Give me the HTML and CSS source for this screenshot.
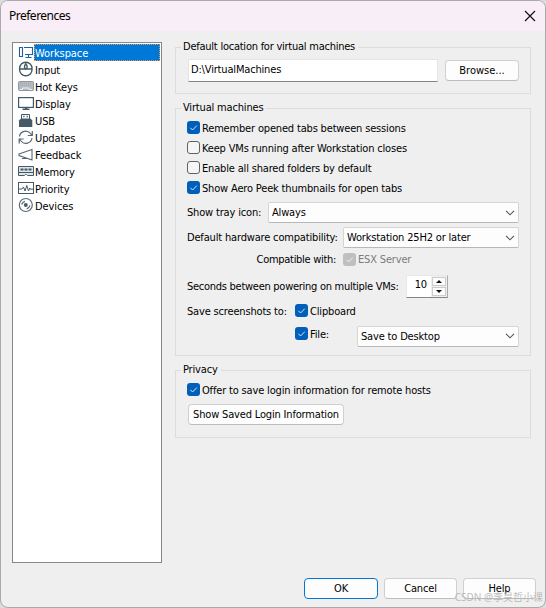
FILE: index.html
```html
<!DOCTYPE html>
<html lang="en">
<head>
<meta charset="utf-8">
<title>Preferences</title>
<link rel="stylesheet" href="styles.css">
</head>
<body>
<svg width="0" height="0" class="defs">
  <symbol id="tick" viewBox="0 0 13 13"><path d="M3.4 6.8l2.2 2.2 4.2-4.4" fill="none" stroke="currentColor"/></symbol>
  <symbol id="chev" viewBox="0 0 10 6"><path d="M1 .8l4 4 4-4" fill="none" stroke="#555" stroke-width="1.1"/></symbol>
</svg>
<div class="window">
  <header class="titlebar">
    <h1>Preferences</h1>
    <svg class="close" viewBox="0 0 12 12"><path d="M1 1l10 10M11 1L1 11" stroke="#111" stroke-width="1.2"/></svg>
  </header>
  <main class="body">
    <nav class="sidebar">
      <div class="item selected"><svg viewBox="0 0 16 17"><g fill="none" stroke="#1d609f" stroke-width="1.100"><path d="M1.500 3.500h3v9h-3zM6 3.500h8.500v7H7M10.500 10.500v3M7.500 13.500h6"/></g></svg><span>Workspace</span></div>
      <div class="item"><svg viewBox="0 0 16 17"><g fill="none" stroke="#455a68" stroke-width="1.400"><rect x="1.600" y="1.300" width="12.400" height="13.500" rx="6"/><path d="M1.600 8h12.400M7.800 1.500V4"/><rect x="6.600" y="3.700" width="2.400" height="4" rx="1" fill="#fff"/></g></svg><span>Input</span></div>
      <div class="item"><svg viewBox="0 0 16 17"><rect x=".5" y="3.500" width="15" height="9" rx="1" fill="#b4bbc2" stroke="#8d969e"/><path d="M2 5.500h12M2 7.500h12" stroke="#a0a9b1" stroke-dasharray="1 1"/><path d="M2 11.500h2.500V10h6.500v1.500h3" fill="none" stroke="#edf0f2"/></svg><span>Hot Keys</span></div>
      <div class="item"><svg viewBox="0 0 16 17"><rect x=".6" y="2.600" width="14.800" height="9.800" fill="none" stroke="#455a68" stroke-width="1.200"/><path d="M8 12v2" stroke="#455a68" stroke-width="2"/><path d="M4.500 14.300h7" stroke="#455a68" stroke-width="1.400"/></svg><span>Display</span></div>
      <div class="item"><svg viewBox="0 0 16 17"><path d="M3.500 7V2.500h8V7" fill="#fff" stroke="#455a68"/><path d="M5.200 4.500h1.300M8.500 4.500h1.300" stroke="#455a68" stroke-width="1.300"/><path d="M3 6.500h9.500l1.800 2V15H1V8.500z" fill="#455a68"/></svg><span>USB</span></div>
      <div class="item"><svg viewBox="0 0 16 17"><g fill="none" stroke="#566873" stroke-width="1.200"><path d="M1.500 7.500A6.200 6.200 0 0 1 12.500 4.500l1.500 2M14.300 2v4.500h-4.500M14 9A6.200 6.200 0 0 1 3 12L1.500 10M1.200 14.500V10h4.500"/></g></svg><span>Updates</span></div>
      <div class="item"><svg viewBox="0 0 16 17"><path d="M1 8l13-4.500v10.500L1 9.500zM4.500 10.700V12.500h4v-.5" fill="none" stroke="#566873" stroke-width="1.100"/></svg><span>Feedback</span></div>
      <div class="item"><svg viewBox="0 0 16 17"><path d="M.5 3.500h15v9h-6l-1-1h-1l-1 1h-6z" fill="#dfe4e8" stroke="#455a68"/><path d="M2.500 6.500h3M6.500 6.500h3M10.500 6.500h3" stroke="#455a68" stroke-width="2"/><path d="M1 9.500h14" stroke="#455a68"/></svg><span>Memory</span></div>
      <div class="item"><svg viewBox="0 0 16 17"><rect x=".5" y="2.500" width="15" height="11" fill="none" stroke="#455a68"/><path d="M1 9h3l1.500-2 1.500 4 1.800-5.500 1.700 5.500 1.300-3 .7 1.200H15" fill="none" stroke="#455a68"/></svg><span>Priority</span></div>
      <div class="item"><svg viewBox="0 0 16 17"><g fill="none" stroke="#5d6e79" stroke-width="1.200"><circle cx="7.800" cy="8" r="6.500"/><path d="M3.600 7.500Q4.500 5 7 4.300M12 8.500Q11 11.200 8.600 12"/></g><circle cx="7.800" cy="8" r="1.900" fill="#455a68"/></svg><span>Devices</span></div>
    </nav>
    <div class="panel">
      <fieldset class="group location">
        <legend>Default location for virtual machines</legend>
        <div class="row loc">
          <div class="field">D:\VirtualMachines</div>
          <button class="btn browse">Browse...</button>
        </div>
      </fieldset>
      <fieldset class="group vms">
        <legend>Virtual machines</legend>
        <div class="row check"><i class="box on"><svg><use href="#tick"/></svg></i><span>Remember opened tabs between sessions</span></div>
        <div class="row check"><i class="box"></i><span>Keep VMs running after Workstation closes</span></div>
        <div class="row check"><i class="box"></i><span>Enable all shared folders by default</span></div>
        <div class="row check"><i class="box on"><svg><use href="#tick"/></svg></i><span>Show Aero Peek thumbnails for open tabs</span></div>
        <div class="row tray"><label>Show tray icon:</label><div class="combo"><span>Always</span><svg><use href="#chev"/></svg></div></div>
        <div class="row hw"><label>Default hardware compatibility:</label><div class="combo"><span>Workstation 25H2 or later</span><svg><use href="#chev"/></svg></div></div>
        <div class="row compat"><label>Compatible with:</label><i class="box off"><svg><use href="#tick"/></svg></i><span>ESX Server</span></div>
        <div class="row secs"><label>Seconds between powering on multiple VMs:</label>
          <div class="spin"><span>10</span><div class="arrows"><b class="up"></b><b class="down"></b></div></div></div>
        <div class="row shots"><label>Save screenshots to:</label><i class="box on"><svg><use href="#tick"/></svg></i><span>Clipboard</span></div>
        <div class="row file"><label></label><i class="box on"><svg><use href="#tick"/></svg></i><span>File:</span><div class="combo"><span>Save to Desktop</span><svg><use href="#chev"/></svg></div></div>
      </fieldset>
      <fieldset class="group privacy">
        <legend>Privacy</legend>
        <div class="row check"><i class="box on"><svg><use href="#tick"/></svg></i><span>Offer to save login information for remote hosts</span></div>
        <button class="btn saved">Show Saved Login Information</button>
      </fieldset>
    </div>
  </main>
  <footer class="footer">
    <button class="btn ok">OK</button>
    <button class="btn">Cancel</button>
    <button class="btn">Help</button>
  </footer>
  <div class="watermark">CSDN @李昊哲小课</div>
</div>
</body>
</html>
```
FILE: styles.css
```css
* { box-sizing: border-box; }
body {
  margin: 0;
  background: #dcdcdc;
  font: 11px/16px "DejaVu Sans Condensed", "DejaVu Sans", sans-serif;
  letter-spacing: -0.17px;
  color: #000;
  white-space: nowrap;
}
.defs { position: absolute; }
.window {
  position: relative;
  width: 546px;
  height: 608px;
  background: #efefef;
  border: 1px solid #aaa;
  border-radius: 8px;
  overflow: hidden;
  display: flex;
  flex-direction: column;
}
.titlebar {
  height: 30px;
  flex: none;
  background: #f9eef7;
  display: flex;
  align-items: center;
  justify-content: space-between;
  padding: 0 9px 0 8px;
}
.titlebar h1 {
  margin: 0;
  font: 12px/16px "Noto Sans", sans-serif;
  letter-spacing: -0.5px;
}
.close { width: 12px; height: 12px; margin-top: -1px; }
.body { display: flex; height: 532px; padding: 8px 14px 0 11px; gap: 13px; }
.sidebar {
  width: 150px;
  height: 521px;
  margin-top: 3px;
  padding: 1px;
  background: #fff;
  border: 1px solid #828790;
}
.item { display: flex; height: 17px; padding-left: 4px; }
.item svg { width: 16px; height: 17px; flex: none; }
.item span { flex: 1; padding-left: 1px; line-height: 19px; height: 17px; letter-spacing: -0.1px; }
.item.selected span {
  color: #fff;
  background: #0078d7;
  outline: 1px dotted #e6964e;
  outline-offset: -1px;
}
.panel { width: 356px; }
.group {
  display: flow-root;
  margin: 0 0 6px;
  padding: 0 11px;
  border: 1px solid #dcdcdc;
  min-width: 0;
}
.group legend { margin-left: -6px; padding: 0 3px 0 2px; height: 16px; }
.location legend { letter-spacing: -0.24px; }
.location { height: 55px; }
.vms { height: 256px; }
.privacy { height: 76px; }
.row { display: flex; align-items: center; }
.loc { padding: 4px 0 0 1px; gap: 7px; }
.field {
  width: 250px;
  height: 23px;
  flex: none;
  padding: 2px 2px;
  background: #fff;
  border: 1px solid #e4e4e4;
  border-bottom: 1px solid #858585;
}
.btn {
  height: 21px;
  padding: 0;
  background: #fdfdfd;
  border: 1px solid #d0d0d0;
  border-bottom-color: #bcbcbc;
  border-radius: 4px;
  font: inherit;
  letter-spacing: inherit;
  color: #000;
  line-height: 18px;
}
.browse { width: 74px; flex: none; letter-spacing: 0; }
.check { height: 20px; }
.check span { padding-top: 1px; }
.vms .check:nth-of-type(1), .privacy .check { margin-top: 2px; }
.box {
  width: 13px;
  height: 13px;
  flex: none;
  margin: -1px 2px 0 0;
  border: 1px solid #626262;
  border-radius: 3px;
  background: #f5f5f5;
}
.box svg { display: block; width: 13px; height: 13px; }
.box.on { border: 0; background: #005fb8; color: #d5e8fa; }
.box.off { border: 0; background: #bfbfbf; color: #f3f3f3; }
.combo {
  height: 21px;
  display: flex;
  align-items: center;
  justify-content: space-between;
  padding: 0 3px;
  background: #fdfdfd;
  border: 1px solid #d5d5d5;
  border-bottom-color: #b8b8b8;
  border-radius: 2px;
}
.combo span { padding-top: 1px; }
.combo svg { width: 10px; height: 6px; }
.tray { height: 21px; margin-top: 4px; }
.tray label { width: 81px; }
.tray .combo { width: 251px; }
.hw { height: 21px; margin-top: 4px; }
.hw label { width: 156px; }
.hw .combo { width: 176px; }
.compat { height: 20px; margin-top: 2px; color: #7b7b7b; }
.compat label { width: 149px; margin-right: 7px; text-align: right; color: #000; letter-spacing: -0.3px; }
.secs { height: 24px; margin-top: 4px; }
.secs label { width: 219px; padding-top: 1px; letter-spacing: -0.27px; }
.spin {
  display: flex;
  width: 42px;
  height: 23px;
  background: #fff;
  border: 1px solid #e8e8e8;
  border-bottom-color: #858585;
  border-right-color: #aaa;
}
.spin span { width: 24px; padding: 1px 4px 0 0; text-align: right; }
.arrows { flex: 1; display: flex; flex-direction: column; gap: 1px; padding: 1px; background: #efefef; }
.arrows b {
  flex: 1;
  display: flex;
  align-items: center;
  justify-content: center;
  background: #fdfdfd;
  border: 1px solid #ccc;
}
.arrows b::after { content: ""; border: 3px solid transparent; }
.arrows .up::after { border-top: 0; border-bottom: 3px solid #111; }
.arrows .down::after { border-bottom: 0; border-top: 3px solid #111; }
.shots { height: 20px; margin-top: 3px; }
.shots label, .file label { width: 108px; }
.shots label, .shots span { padding-top: 1px; }
.file { height: 22px; margin-top: 3px; }
.file > .box { margin-top: -3px; }
.file > span { width: 47px; }
.file .combo { width: 162px; margin-top: 2px; }
.saved { display: block; width: 156px; margin: 4px 0 0 1px; line-height: 20px; }
.footer {
  display: flex;
  justify-content: flex-end;
  gap: 6px;
  padding: 15px 9px 0 0;
}
.footer .btn { width: 73px; height: 21px; line-height: 20px; }
.footer .ok { width: 74px; border-color: #0078d4; }
.watermark {
  position: absolute;
  right: 2px;
  bottom: 2px;
  color: #b2b2b2;
  opacity: .85;
  letter-spacing: 0;
  font: 10px/16px "Noto Sans", "Noto Sans CJK SC", sans-serif;
}
```
